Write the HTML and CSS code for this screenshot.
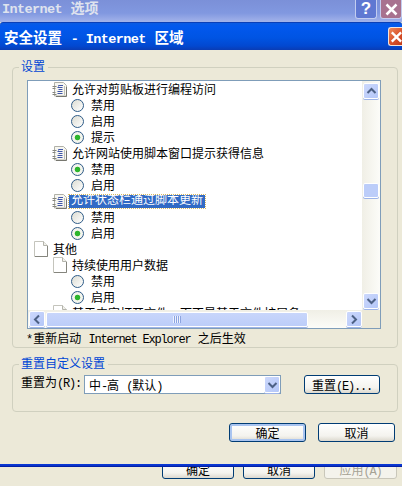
FILE: index.html
```html
<!DOCTYPE html>
<html lang="zh-CN">
<head>
    <meta charset="UTF-8">
    <title>安全设置 - Internet 区域</title>
    <link rel="stylesheet" href="styles.css">
</head>
<body>
    <svg class="defs" width="0" height="0">
        <symbol id="doc" viewBox="0 0 14 16">
            <path d="M.5.5h9l4 4v11H.5z" fill="#fff" stroke="#c4c4bc"/>
            <path d="M9.500.5v4h4" fill="#f0f0ea" stroke="#b4b4ac"/>
            <path d="M13.500 5v10.500H1" fill="none" stroke="#85857d"/>
        </symbol>
        <symbol id="script" viewBox="0 0 15 15">
            <path d="M2.500.5h9l3 3v10.500h-12z" fill="#f6f6f0" stroke="#b0b0a8"/>
            <path d="M.5 4.500h4M.5 6.500h3M.5 10.500h3M.5 12.500h4" stroke="#85857d"/>
            <path d="M4 14.500h10.500V5" fill="none" stroke="#77776f"/>
            <path d="M11 3.500H6.500v1M5.500 5.500h5M6.500 7.500h4M5.500 9.500h5M10.500 11.500h-5" fill="none" stroke="#3f55a8"/>
            <path d="M12.500 4v9" stroke="#c0c0b8"/>
        </symbol>
    </svg>

    <div class="back-title">
        <span class="back-text"><span class="en">Internet</span> 选项</span>
        <span class="back-btn back-help">?</span>
        <span class="back-btn back-close">
            <svg width="13" height="13" viewBox="0 0 13 13"><path d="M1.500 1.500l10 10M11.500 1.500l-10 10" stroke="#fff" stroke-width="2.500"/></svg>
        </span>
    </div>

    <div class="dialog-title">
        <span class="title-text">安全设置 <span class="en">- Internet</span> 区域</span>
        <span class="close-btn">
            <svg width="14" height="14" viewBox="0 0 14 14"><path d="M3 2l10 10M13 2L3 12" stroke="#fff" stroke-width="2.500"/></svg>
        </span>
    </div>

    <div class="dialog-body">
        <fieldset class="group group-settings">
            <legend>设置</legend>
            <div class="listbox">
                <div class="list-rows">
                    <div class="row level2"><svg class="icon-script"><use href="#script"/></svg>允许对剪贴板进行编程访问</div>
                    <div class="row level3"><span class="radio"></span>禁用</div>
                    <div class="row level3"><span class="radio"></span>启用</div>
                    <div class="row level3"><span class="radio checked"></span>提示</div>
                    <div class="row level2"><svg class="icon-script"><use href="#script"/></svg>允许网站使用脚本窗口提示获得信息</div>
                    <div class="row level3"><span class="radio checked"></span>禁用</div>
                    <div class="row level3"><span class="radio"></span>启用</div>
                    <div class="row level2"><svg class="icon-script"><use href="#script"/></svg><span class="selected">允许状态栏通过脚本更新</span></div>
                    <div class="row level3"><span class="radio"></span>禁用</div>
                    <div class="row level3"><span class="radio checked"></span>启用</div>
                    <div class="row level1"><svg class="icon-doc"><use href="#doc"/></svg>其他</div>
                    <div class="row level2"><svg class="icon-doc"><use href="#doc"/></svg>持续使用用户数据</div>
                    <div class="row level3"><span class="radio"></span>禁用</div>
                    <div class="row level3"><span class="radio checked"></span>启用</div>
                    <div class="row level2"><svg class="icon-doc"><use href="#doc"/></svg>基于内容打开文件，而不是基于文件扩展名</div>
                </div>
                <div class="vscroll">
                    <span class="sb-btn">
                        <svg width="11" height="8" viewBox="0 0 11 8"><path d="M1.500 6l4-4 4 4" fill="none" stroke="#4d6185" stroke-width="2"/></svg>
                    </span>
                    <span class="sb-thumb-v"></span>
                    <span class="sb-btn sb-end-v">
                        <svg width="11" height="8" viewBox="0 0 11 8"><path d="M1.500 2l4 4 4-4" fill="none" stroke="#4d6185" stroke-width="2"/></svg>
                    </span>
                </div>
                <div class="hscroll">
                    <span class="sb-btn">
                        <svg width="8" height="11" viewBox="0 0 8 11"><path d="M6 1.500l-4 4 4 4" fill="none" stroke="#4d6185" stroke-width="2"/></svg>
                    </span>
                    <span class="sb-thumb-h"><span class="grip"></span></span>
                    <span class="sb-btn">
                        <svg width="8" height="11" viewBox="0 0 8 11"><path d="M2 1.500l4 4-4 4" fill="none" stroke="#4d6185" stroke-width="2"/></svg>
                    </span>
                </div>
                <div class="corner"></div>
            </div>
            <div class="note">*重新启动 <span class="en">Internet Explorer</span> 之后生效</div>
        </fieldset>

        <fieldset class="group group-reset">
            <legend>重置自定义设置</legend>
            <div class="reset-row">
                <label class="reset-label">重置为<span class="en">(R):</span></label>
                <div class="combo">
                    <span class="combo-text">中<span class="en">-</span>高 <span class="en">(</span>默认<span class="en">)</span></span>
                    <span class="sb-btn">
                        <svg width="11" height="8" viewBox="0 0 11 8"><path d="M1.500 2l4 4 4-4" fill="none" stroke="#4d6185" stroke-width="2"/></svg>
                    </span>
                </div>
                <button class="btn btn-reset" type="button">重置<span class="en">(E)...</span></button>
            </div>
        </fieldset>

        <div class="actions">
            <button class="btn btn-main btn-default" type="button">确定</button>
            <button class="btn btn-main" type="button">取消</button>
        </div>
    </div>

    <div class="back-line"></div>
    <div class="back-actions">
        <button class="btn btn-back" type="button">确定</button>
        <button class="btn btn-back" type="button">取消</button>
        <button class="btn btn-back btn-disabled" type="button">应用<span class="en">(A)</span></button>
    </div>
</body>
</html>
```

FILE: styles.css
```css
html, body {
    margin: 0;
    padding: 0;
}
body {
    width: 402px;
    height: 486px;
    overflow: hidden;
    display: flex;
    flex-direction: column;
    background: #ece9d8;
    color: #000;
    font-family: "Liberation Mono", "Noto Sans CJK SC", monospace;
    font-size: 12px;
}
.defs {
    position: absolute;
}
.en {
    font-size: 12px;
    letter-spacing: -1.2px;
}

/* window behind the dialog */
.back-title {
    height: 22px;
    flex: none;
    display: flex;
    align-items: flex-start;
    background: linear-gradient(#7b90d8, #8198e0 60%, #a3b3ea);
}
.back-text {
    margin: 0 auto 0 2px;
    line-height: 18px;
    font-size: 14px;
    font-weight: bold;
    color: #dfe3ee;
}
.back-text .en {
    font-size: 13.5px;
    letter-spacing: -.6px;
}
.back-btn {
    width: 20px;
    height: 18px;
    display: flex;
    align-items: center;
    justify-content: center;
    border: 1px solid #c3cdf0;
    border-top: none;
    border-radius: 0 0 3px 3px;
}
.back-help {
    margin-right: 3px;
    background: #5f78d2;
    color: #fff;
    font-family: "Liberation Sans", sans-serif;
    font-size: 17px;
    font-weight: bold;
}
.back-close {
    background: #a8728f;
}

/* dialog title */
.dialog-title {
    height: 28px;
    flex: none;
    display: flex;
    align-items: center;
    justify-content: space-between;
    box-sizing: border-box;
    border-top: 1px solid #0a3fb8;
    border-radius: 3px 3px 0 0;
    background: linear-gradient(#0a5ae2, #0258ee 12%, #0054e3 55%, #0248d0 85%, #0a3cb4);
}
.title-text {
    margin-left: 4px;
    color: #fff;
    font-size: 14.5px;
    font-weight: bold;
    white-space: nowrap;
}
.title-text .en {
    font-size: 13.5px;
    letter-spacing: -.6px;
}
.close-btn {
    width: 14px;
    height: 19px;
    display: flex;
    align-items: center;
    overflow: hidden;
    box-sizing: border-box;
    border: 1px solid #f2e3dc;
    border-right: none;
    border-radius: 3px 0 0 3px;
    background: linear-gradient(135deg, #ee8a5a, #d9532c 55%, #c23a18);
}

/* dialog body */
.dialog-body {
    height: 414px;
    flex: none;
    box-sizing: border-box;
    padding: 8px 4px 0 12px;
}
.group {
    margin: 0;
    padding: 0;
    box-sizing: border-box;
    border: 1px solid #d0d0bf;
    border-radius: 4px;
}
.group legend {
    margin-left: 6px;
    padding: 2px 3px 0 2px;
    line-height: 16px;
    color: #0046d5;
}
.group-settings {
    height: 290px;
    padding-top: 4px;
}
.group-reset {
    height: 57px;
    margin-top: 7px;
    padding-top: 2px;
}

/* settings list */
.listbox {
    width: 354px;
    height: 249px;
    margin-left: 14px;
    box-sizing: border-box;
    display: grid;
    grid-template-columns: 334px 18px;
    grid-template-rows: 229px 18px;
    border: 1px solid #7f9db9;
    background: #fff;
}
.list-rows {
    overflow: hidden;
}
.row {
    height: 16px;
    display: flex;
    align-items: center;
    gap: 5px;
    white-space: nowrap;
}
.level1 {
    padding-left: 6px;
}
.level2 {
    padding-left: 25px;
}
.level3 {
    padding-left: 43px;
    gap: 7px;
}
.icon-doc {
    width: 14px;
    height: 16px;
    flex: none;
}
.icon-script {
    width: 15px;
    height: 15px;
    flex: none;
    margin-left: -1px;
}
.radio {
    width: 13px;
    height: 13px;
    flex: none;
    box-sizing: border-box;
    border: 1px solid #2f5c88;
    border-radius: 50%;
    background: linear-gradient(135deg, #dcdcd2, #fff);
}
.radio.checked {
    background: radial-gradient(circle, #2db52d 0, #2db52d 2.4px, #f6f6f0 3.2px, #eeeee6 100%);
}
.selected {
    margin-left: -3px;
    padding: 0 2px;
    line-height: 13px;
    color: #fff;
    background: #316ac5;
    outline: 1px dotted #d8b860;
}

/* scrollbars */
.sb-btn {
    width: 16px;
    height: 16px;
    flex: none;
    display: flex;
    align-items: center;
    justify-content: center;
    box-sizing: border-box;
    border: 1px solid #fff;
    border-radius: 2px;
    background: linear-gradient(135deg, #ccd8fc, #b4c7f8);
    box-shadow: 0 1px 0 #9db4e8;
}
.vscroll {
    display: flex;
    flex-direction: column;
    align-items: center;
    padding: 2px 0 1px;
    box-sizing: border-box;
    background: linear-gradient(90deg, #f0efe6, #fcfcf8);
}
.sb-thumb-v {
    width: 16px;
    height: 15px;
    margin-top: 84px;
    box-sizing: border-box;
    border: 1px solid #fff;
    border-radius: 2px;
    background: #bccdf9;
    box-shadow: 0 1px 0 #9db4e8;
}
.sb-end-v {
    margin-top: auto;
}
.hscroll {
    display: flex;
    align-items: center;
    gap: 1px;
    padding-left: 1px;
    box-sizing: border-box;
    background: linear-gradient(#f0efe6, #fcfcf8);
}
.sb-thumb-h {
    width: 262px;
    height: 15px;
    margin-right: 37px;
    display: flex;
    align-items: center;
    justify-content: center;
    box-sizing: border-box;
    border: 1px solid #fff;
    border-radius: 2px;
    background: linear-gradient(#c8d6fb, #bccdf9);
    box-shadow: 0 1px 0 #9db4e8;
}
.grip {
    width: 8px;
    height: 7px;
    background: repeating-linear-gradient(90deg, #eef2fe 0 1px, #8ca4e0 1px 2px);
}
.corner {
    background: #ece9d8;
}
.note {
    margin: 3px 0 0 13px;
    line-height: 16px;
}

/* reset group */
.reset-row {
    display: flex;
    align-items: flex-start;
    margin-left: 8px;
}
.reset-label {
    width: 63px;
    line-height: 19px;
    white-space: nowrap;
}
.combo {
    width: 197px;
    height: 19px;
    display: flex;
    align-items: center;
    justify-content: space-between;
    box-sizing: border-box;
    border: 1px solid #7f9db9;
    background: #fff;
}
.combo-text {
    margin-left: 4px;
    white-space: nowrap;
}
.combo .sb-btn {
    height: 17px;
}
.btn {
    padding: 0;
    box-sizing: border-box;
    border: 1px solid #003c74;
    border-radius: 3px;
    background: linear-gradient(#fff, #f4f3ee 70%, #dcd8ce);
    color: #000;
    font-family: inherit;
    font-size: 12px;
}
.btn-reset {
    width: 76px;
    height: 19px;
    margin-left: 23px;
}
.actions {
    display: flex;
    justify-content: flex-end;
    gap: 12px;
    margin: 11px 3px 0 0;
}
.btn-main {
    width: 77px;
    height: 19px;
}
.btn-default {
    box-shadow: inset 0 0 0 2px #a9c4f0;
}

/* behind the dialog, bottom */
.back-line {
    height: 3px;
    flex: none;
    background: linear-gradient(#0a3ad8, #0831c8 60%, #00138c);
}
.back-actions {
    height: 19px;
    flex: none;
    display: flex;
    gap: 9px;
    padding-left: 162px;
    overflow: hidden;
}
.btn-back {
    width: 72px;
    height: 19px;
    margin-top: -7px;
    flex: none;
}
.btn-disabled {
    width: 73px;
    border-color: #c9c7ba;
    background: #f4f3ec;
    color: #a5a294;
}
```
